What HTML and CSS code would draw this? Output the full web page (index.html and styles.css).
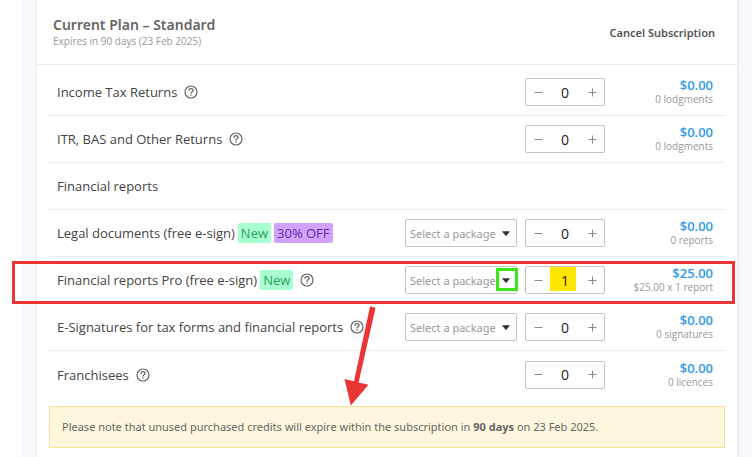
FILE: index.html
```html
<!DOCTYPE html>
<html lang="en">
<head>
  <meta charset="UTF-8">
  <meta name="viewport" content="width=device-width, initial-scale=1.0">
  <title>Subscription</title>
  <link rel="stylesheet" href="styles.css">
</head>
<body>

  <svg class="defs" width="0" height="0">
    <symbol id="help" viewBox="0 0 14 14">
      <circle cx="7" cy="7" r="6" fill="none" stroke="currentColor" stroke-width="1.2"/>
      <path d="M5 5.7C5 4.4 5.9 3.7 7 3.7s2 .7 2 1.8c0 1.3-2 1.4-2 2.9" fill="none" stroke="currentColor" stroke-width="1.3"/>
      <circle cx="7" cy="10" r=".8" fill="currentColor"/>
    </symbol>
    <symbol id="minus" viewBox="0 0 9 9">
      <path d="M0.5 4.5h8" stroke="currentColor"/>
    </symbol>
    <symbol id="plus" viewBox="0 0 9 9">
      <path d="M0.5 4.5h8M4.5 0.5v8" stroke="currentColor"/>
    </symbol>
    <symbol id="caret" viewBox="0 0 8 5">
      <path d="M0.8 0.3h6.4q.8 0 .3.7L4.6 4.4q-.6.6-1.2 0L.5 1Q0 .3.8.3z" fill="currentColor"/>
    </symbol>
  </svg>

  <div class="page">
    <main class="card">
      <header class="card-header">
        <div>
          <h1 class="plan-title">Current Plan – Standard</h1>
          <p class="plan-expiry">Expires in 90 days (23 Feb 2025)</p>
        </div>
        <button class="cancel-btn" type="button">Cancel Subscription</button>
      </header>

      <ul class="plan-list">
        <li class="plan-row">
          <label class="name" for="qty-income">Income Tax Returns</label>
          <svg class="help"><use href="#help"/></svg>
          <div class="controls">
            <div class="stepper">
              <button type="button" aria-label="Decrease"><svg><use href="#minus"/></svg></button>
              <input type="text" id="qty-income" value="0">
              <button type="button" aria-label="Increase"><svg><use href="#plus"/></svg></button>
            </div>
            <div class="amount"><strong>$0.00</strong><small>0 lodgments</small></div>
          </div>
        </li>

        <li class="plan-row">
          <label class="name" for="qty-itr">ITR, BAS and Other Returns</label>
          <svg class="help"><use href="#help"/></svg>
          <div class="controls">
            <div class="stepper">
              <button type="button" aria-label="Decrease"><svg><use href="#minus"/></svg></button>
              <input type="text" id="qty-itr" value="0">
              <button type="button" aria-label="Increase"><svg><use href="#plus"/></svg></button>
            </div>
            <div class="amount"><strong>$0.00</strong><small>0 lodgments</small></div>
          </div>
        </li>

        <li class="plan-row">
          <span class="name">Financial reports</span>
        </li>

        <li class="plan-row">
          <label class="name" for="qty-legal">Legal documents (free e-sign)</label>
          <span class="tag tag-new">New</span>
          <span class="tag tag-off">30% OFF</span>
          <div class="controls">
            <div class="package">
              <select aria-label="Legal documents package"><option>Select a package</option></select>
              <svg class="caret"><use href="#caret"/></svg>
            </div>
            <div class="stepper">
              <button type="button" aria-label="Decrease"><svg><use href="#minus"/></svg></button>
              <input type="text" id="qty-legal" value="0">
              <button type="button" aria-label="Increase"><svg><use href="#plus"/></svg></button>
            </div>
            <div class="amount"><strong>$0.00</strong><small>0 reports</small></div>
          </div>
        </li>

        <li class="plan-row">
          <label class="name" for="qty-pro">Financial reports Pro (free e-sign)</label>
          <span class="tag tag-new">New</span>
          <svg class="help"><use href="#help"/></svg>
          <div class="controls">
            <div class="package">
              <select aria-label="Financial reports Pro package"><option>Select a package</option></select>
              <svg class="caret"><use href="#caret"/></svg>
              <span class="mark-caret"></span>
            </div>
            <div class="stepper">
              <button type="button" aria-label="Decrease"><svg><use href="#minus"/></svg></button>
              <input type="text" id="qty-pro" class="marked" value="1">
              <button type="button" aria-label="Increase"><svg><use href="#plus"/></svg></button>
            </div>
            <div class="amount"><strong>$25.00</strong><small>$25.00 x 1 report</small></div>
          </div>
          <span class="mark-row"></span>
          <svg class="mark-arrow" viewBox="0 0 34 100">
            <path d="M26 0.5L31.5 1.8L14.6 76.5L24.5 78.7L6.8 99.5L0.5 73L10 75.2z" fill="#ea3535"/>
          </svg>
        </li>

        <li class="plan-row">
          <label class="name" for="qty-sign">E-Signatures for tax forms and financial reports</label>
          <svg class="help"><use href="#help"/></svg>
          <div class="controls">
            <div class="package">
              <select aria-label="E-Signatures package"><option>Select a package</option></select>
              <svg class="caret"><use href="#caret"/></svg>
            </div>
            <div class="stepper">
              <button type="button" aria-label="Decrease"><svg><use href="#minus"/></svg></button>
              <input type="text" id="qty-sign" value="0">
              <button type="button" aria-label="Increase"><svg><use href="#plus"/></svg></button>
            </div>
            <div class="amount"><strong>$0.00</strong><small>0 signatures</small></div>
          </div>
        </li>

        <li class="plan-row">
          <label class="name" for="qty-franchise">Franchisees</label>
          <svg class="help"><use href="#help"/></svg>
          <div class="controls">
            <div class="stepper">
              <button type="button" aria-label="Decrease"><svg><use href="#minus"/></svg></button>
              <input type="text" id="qty-franchise" value="0">
              <button type="button" aria-label="Increase"><svg><use href="#plus"/></svg></button>
            </div>
            <div class="amount"><strong>$0.00</strong><small>0 licences</small></div>
          </div>
        </li>
      </ul>

      <p class="notice">Please note that unused purchased credits will expire within the subscription in <b>90 days</b> on 23 Feb 2025.</p>
    </main>
  </div>

</body>
</html>
```

FILE: styles.css
```css
* {
  margin: 0;
  padding: 0;
  box-sizing: border-box;
}

body {
  font-family: "Open Sans", "Noto Sans", sans-serif;
  font-size: 13px;
  color: #444;
  background-color: #fff;
  padding-left: 21px;
}

.defs {
  position: absolute;
}

.page {
  min-height: 100vh;
  background-color: #f8f9fc;
  padding: 0 15px 0 16px;
  display: flex;
}

.card {
  flex: 1;
  background-color: #fff;
  box-shadow: 0 0 3px rgba(0, 0, 0, 0.12);
}

.card-header {
  display: flex;
  justify-content: space-between;
  align-items: center;
  padding: 16px 22px 16px 16px;
  border-bottom: 1px solid #ebebeb;
}

.plan-title,
.cancel-btn,
.package select,
.notice {
  font-family: "Noto Sans", "Open Sans", sans-serif;
}

.plan-title {
  font-size: 14px;
  line-height: 18px;
  font-weight: 600;
  color: #666;
}

.plan-expiry {
  font-size: 10px;
  line-height: 14px;
  color: #999;
}

.cancel-btn {
  font-size: 11px;
  font-weight: 600;
  color: #555;
  background: none;
  border: none;
  cursor: pointer;
}

.plan-list {
  list-style: none;
  margin: 4px 12px 0 12px;
}

.plan-row {
  position: relative;
  display: flex;
  align-items: center;
  height: 47px;
  padding: 0 12px 0 8px;
  border-bottom: 1px solid #ebebeb;
}

.plan-row:last-child {
  border-bottom: none;
}

.help {
  width: 14px;
  height: 14px;
  margin-left: 7px;
  color: #666;
}

.tag {
  margin-left: 3px;
  padding: 0 3px;
  line-height: 20px;
  border-radius: 2px;
}

.tag-new {
  background-color: #a8ffd0;
  color: #2e9e63;
}

.tag-off {
  background-color: #d0a3ff;
  color: #6527a3;
}

.controls {
  display: flex;
  align-items: center;
  gap: 8px;
  margin-left: auto;
}

.package {
  position: relative;
}

.package select {
  appearance: none;
  display: block;
  width: 112px;
  height: 28px;
  padding-left: 4px;
  font-size: 11px;
  color: #999;
  background-color: #fff;
  border: 1px solid #c4c4c4;
  border-radius: 2px;
}

.caret {
  position: absolute;
  top: 12px;
  right: 7px;
  width: 8px;
  height: 5px;
  color: #333;
  pointer-events: none;
}

.stepper {
  display: flex;
  width: 80px;
  height: 28px;
  border: 1px solid #c4c4c4;
  border-radius: 2px;
}

.stepper button {
  display: flex;
  align-items: center;
  justify-content: center;
  width: 24px;
  color: #888;
  background: none;
  border: none;
  cursor: pointer;
}

.stepper button svg {
  width: 9px;
  height: 9px;
}

.stepper input {
  flex: 1;
  min-width: 0;
  font-family: inherit;
  font-size: 14px;
  color: #222;
  text-align: center;
  background: none;
  border: none;
}

.stepper .marked {
  background: linear-gradient(#ffe600, #ffe600) no-repeat left 0 top 0 / 26px 24px;
}

.amount {
  width: 100px;
  text-align: right;
}

.amount strong {
  display: block;
  line-height: 14px;
  font-weight: 600;
  color: #2f9bec;
}

.amount small {
  display: block;
  font-size: 10px;
  line-height: 14px;
  color: #999;
}

/* annotations over the highlighted row */
.mark-row {
  position: absolute;
  top: 4px;
  right: -10px;
  bottom: -1px;
  left: -37px;
  border: 3px solid #ea3535;
  pointer-events: none;
}

.mark-caret {
  position: absolute;
  top: 2px;
  right: -1px;
  width: 22px;
  height: 23px;
  border: 3px solid #3ee619;
  pointer-events: none;
}

.mark-arrow {
  position: absolute;
  top: 49px;
  left: 295px;
  width: 34px;
  height: 100px;
  z-index: 1;
  pointer-events: none;
}

.notice {
  margin: 8px 12px 10px 12px;
  padding: 12px;
  font-size: 11px;
  line-height: 16px;
  color: #666;
  background-color: #fff6de;
  border: 1px solid #fbe19a;
}
```
